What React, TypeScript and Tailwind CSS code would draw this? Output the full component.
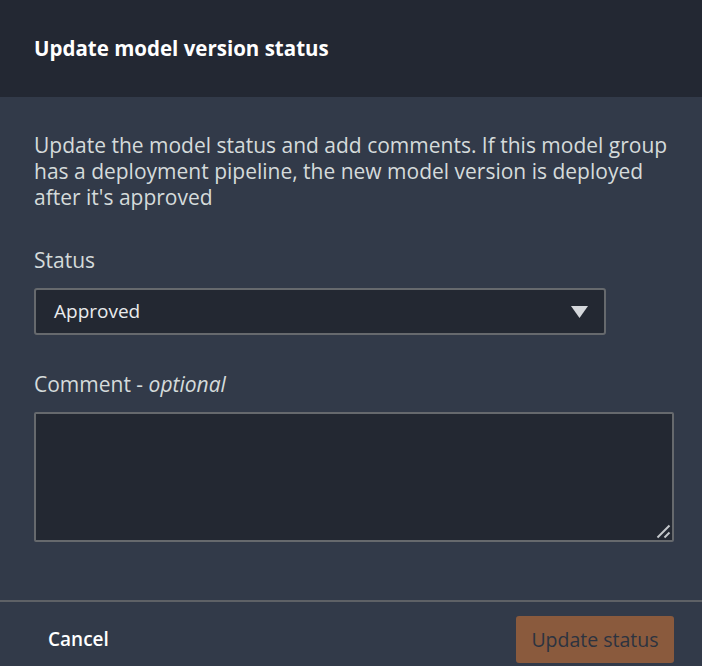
export default function App() {
  return (
    <div className="w-[702px] h-[666px] overflow-hidden bg-[#323a49] font-['Open_Sans',sans-serif] flex flex-col">
      {/* Header */}
      <div className="h-[97px] shrink-0 bg-[#232833] px-[34px] flex items-center">
        <h2 className="text-[20.5px] font-bold text-white">Update model version status</h2>
      </div>

      {/* Body */}
      <div className="h-[503px] shrink-0 pl-[34px] pr-[28px] pt-[35px]">
        <p className="text-[21px] leading-[26px] text-[#d5dbdb]">
          Update the model status and add comments. If this model group has a deployment pipeline, the new model
          version is deployed after it's approved
        </p>

        <label className="block mt-[37px] text-[21px] leading-[26px] text-[#d5dbdb]">Status</label>
        <div className="mt-[15px] w-[572px] h-[47px] rounded-[3px] border-2 border-[#66696d] bg-[#232832] pl-[18px] pr-[16px] flex items-center justify-between">
          <span className="text-[19px] text-[#e9ebed]">Approved</span>
          <svg width="17" height="12" viewBox="0 0 17 12">
            <path d="M0 0 H17 L8.5 12 Z" fill="#d5d8dc" />
          </svg>
        </div>

        <label className="block mt-[36px] text-[21px] leading-[26px] text-[#d5dbdb]">
          Comment - <i>optional</i>
        </label>
        <div className="relative mt-[15px] w-[640px] h-[130px]">
          <textarea className="block w-full h-full rounded-[2px] border-2 border-[#66696d] bg-[#232832] text-[#e9ebed] outline-none resize-none" />
          {/* resize grip */}
          <svg className="absolute right-[3px] bottom-[3px]" width="15" height="15" viewBox="0 0 15 15">
            <path d="M1.5 13.5 L13.5 1.5" stroke="#c4c8cc" strokeWidth="2" />
            <path d="M8.5 13.5 L13.5 8.5" stroke="#c4c8cc" strokeWidth="2" />
          </svg>
        </div>
      </div>

      {/* Footer */}
      <div className="flex-1 border-t-2 border-[#5e6166] pl-[34px] pr-[28px] pt-[14px] flex items-start justify-between">
        <button className="h-[47px] px-[14px] text-[19px] font-semibold text-white">Cancel</button>
        <button className="h-[47px] w-[158px] rounded-[3px] bg-[#8a5a3d] text-[19.5px] text-[#2c3340]">Update status</button>
      </div>
    </div>
  );
}
